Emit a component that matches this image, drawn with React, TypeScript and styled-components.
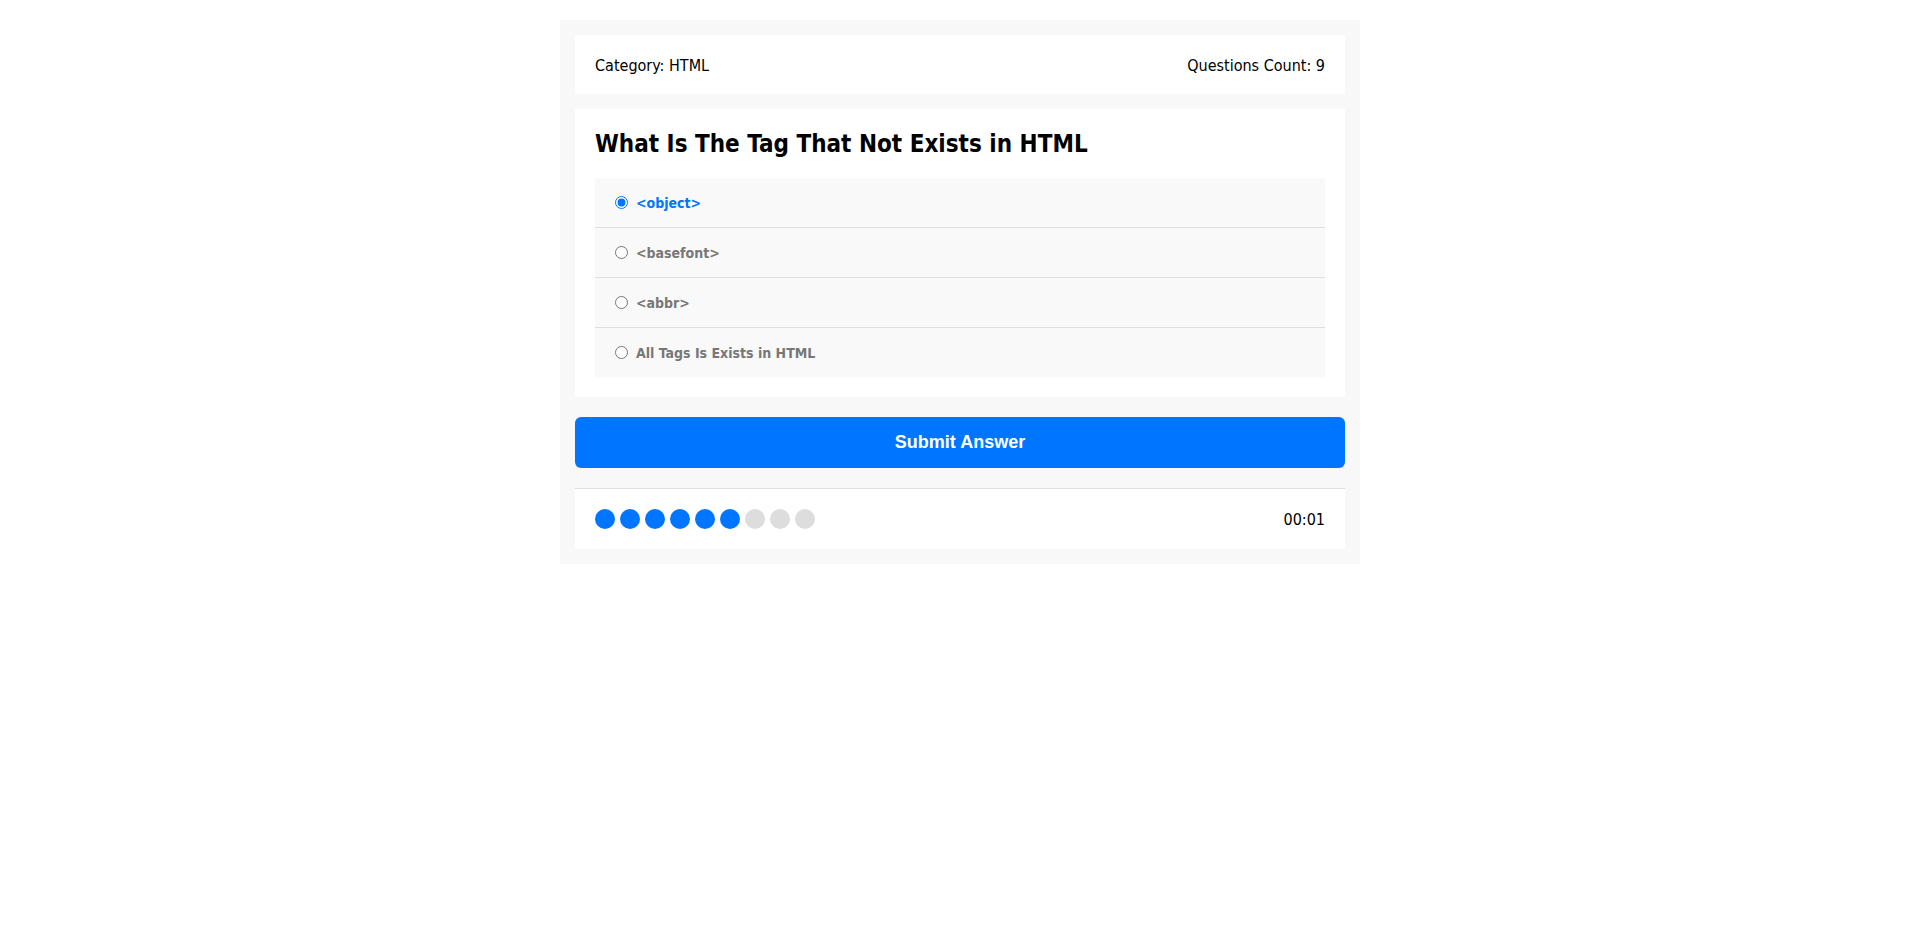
import React from "react";
import styled, { createGlobalStyle } from "styled-components";

const GlobalStyle = createGlobalStyle`
  html, body { margin: 0; padding: 0; background: #fff; }
  body { font-family: "DejaVu Sans Condensed", "DejaVu Sans", Verdana, sans-serif; color: #000; }
  * { box-sizing: border-box; }
`;

const QuizApp = styled.div`
  width: 800px;
  margin: 20px auto;
  background-color: #f8f8f8;
  padding: 15px;
`;

const InfoBar = styled.div`
  display: flex;
  justify-content: space-between;
  align-items: center;
  background: #fff;
  padding: 21px 20px 19px;
  font-size: 16px;
  line-height: 19px;
`;

const QuizArea = styled.div`
  background: #fff;
  padding: 21px 20px 20px;
  margin-top: 15px;
`;

const Question = styled.h2`
  margin: 0 0 19px;
  font-size: 24px;
  line-height: 29px;
  font-weight: bold;
`;

const Answers = styled.div`
  background: #f9f9f9;
`;

const Answer = styled.div`
  display: flex;
  align-items: center;
  height: 49px;
  padding: 0 15px;
  &:not(:last-child) {
    border-bottom: 1px solid #dfdfdf;
    height: 50px;
  }
`;

const Radio = styled.input`
  width: 13px;
  height: 13px;
  margin: 0 3px 0 5px;
  accent-color: #0075ff;
`;

const Label = styled.label<{ $checked?: boolean }>`
  margin-left: 5px;
  font-size: 14px;
  font-weight: bold;
  color: ${(p) => (p.$checked ? "#0075ff" : "#777")};
  cursor: pointer;
`;

const SubmitButton = styled.button`
  display: block;
  width: 100%;
  margin: 20px 0;
  padding: 15px;
  border: none;
  border-radius: 6px;
  background-color: #0075ff;
  color: #fff;
  font-family: "Liberation Sans", Arial, sans-serif;
  font-size: 18px;
  line-height: 21px;
  font-weight: bold;
  cursor: pointer;
`;

const BulletsBar = styled.div`
  display: flex;
  justify-content: space-between;
  align-items: center;
  background: #fff;
  border-top: 1px solid #dfdfdf;
  padding: 20px;
`;

const Dots = styled.div`
  display: flex;
`;

const Dot = styled.span<{ $on?: boolean }>`
  width: 20px;
  height: 20px;
  margin-right: 5px;
  border-radius: 50%;
  background: ${(p) => (p.$on ? "#0075ff" : "#ddd")};
`;

const Timer = styled.div`
  font-size: 16px;
  line-height: 19px;
`;

const answers = ["<object>", "<basefont>", "<abbr>", "All Tags Is Exists in HTML"];

export default function App() {
  const [selected, setSelected] = React.useState(0);
  return (
    <>
      <GlobalStyle />
      <QuizApp>
        <InfoBar>
          <div>Category: HTML</div>
          <div>Questions Count: 9</div>
        </InfoBar>
        <QuizArea>
          <Question>What Is The Tag That Not Exists in HTML</Question>
          <Answers>
            {answers.map((a, i) => (
              <Answer key={i}>
                <Radio
                  type="radio"
                  name="question"
                  id={`answer_${i}`}
                  checked={selected === i}
                  onChange={() => setSelected(i)}
                />
                <Label htmlFor={`answer_${i}`} $checked={selected === i}>
                  {a}
                </Label>
              </Answer>
            ))}
          </Answers>
        </QuizArea>
        <SubmitButton>Submit Answer</SubmitButton>
        <BulletsBar>
          <Dots>
            {Array.from({ length: 9 }).map((_, i) => (
              <Dot key={i} $on={i < 6} />
            ))}
          </Dots>
          <Timer>00:01</Timer>
        </BulletsBar>
      </QuizApp>
    </>
  );
}
